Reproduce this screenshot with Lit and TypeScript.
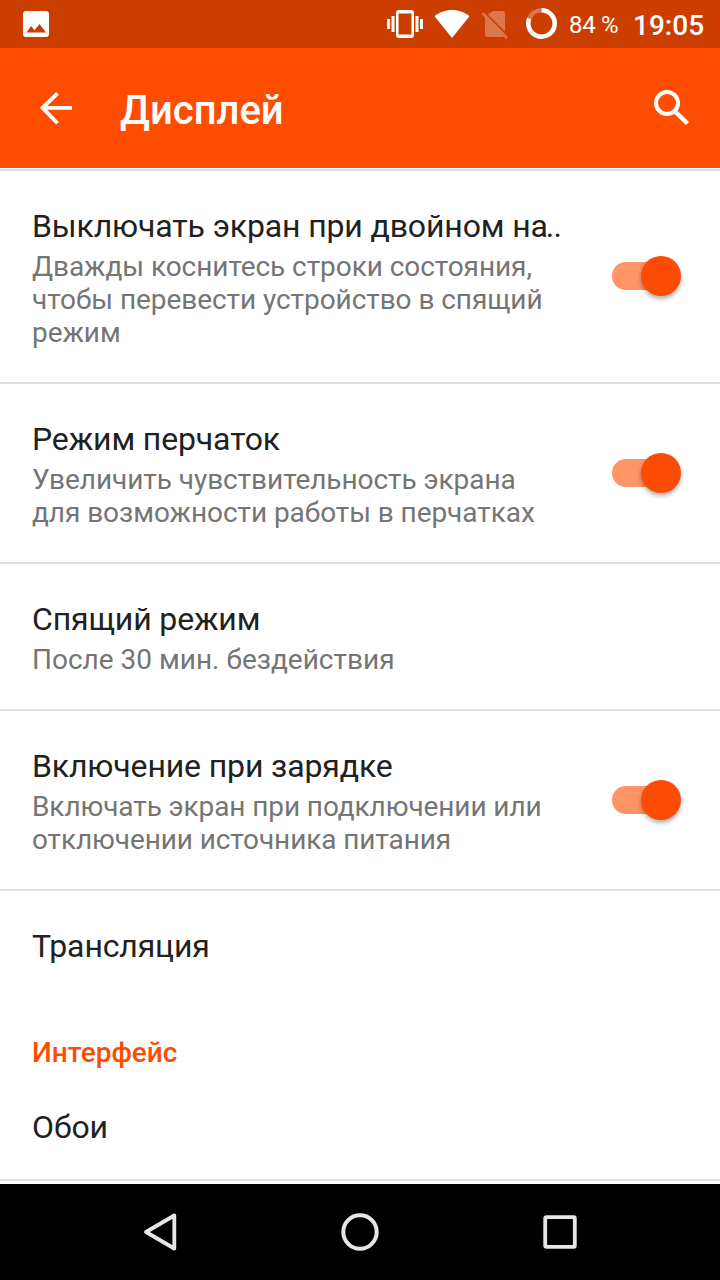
import { LitElement, html, css, nothing } from "lit";
import { customElement, property } from "lit/decorators.js";

@customElement("toggle-switch")
class ToggleSwitch extends LitElement {
  static styles = css`
    :host { display: flex; align-items: center; width: 69px; height: 40px; flex: none; margin-bottom: 1px; }
    .track { width: 58px; height: 28px; border-radius: 14px; background: #ff9466; flex: none; }
    .thumb {
      width: 40px; height: 40px; border-radius: 50%; background: #fa4c04; flex: none;
      margin-left: -29px; box-shadow: 0 3px 4px rgba(0, 0, 0, 0.3);
    }
  `;
  render() {
    return html`<div class="track"></div><div class="thumb"></div>`;
  }
}

@customElement("setting-row")
class SettingRow extends LitElement {
  @property() heading = "";
  @property({ type: Boolean }) truncated = false;
  @property({ attribute: false }) lines: string[] = [];
  @property({ type: Boolean }) toggle = false;

  static styles = css`
    :host {
      display: flex; align-items: center; justify-content: space-between;
      box-sizing: border-box; padding-right: 39px; flex: none;
    }
    .text { padding: 36px 0 33px 32px; }
    .title { font-size: 32px; line-height: 38px; color: #212121; white-space: nowrap; letter-spacing: -0.13px; }
    .dots { margin-left: -2px; letter-spacing: -0.8px; }
    .summary { margin-top: 5px; font-size: 28px; line-height: 33px; color: #757575; white-space: nowrap; letter-spacing: -0.06px; }
    :host(.charge) .summary { letter-spacing: -0.1px; }
    :host(.short) .summary { letter-spacing: 0; }
  `;
  render() {
    return html`
      <div class="text">
        <div class="title">${this.heading}${this.truncated ? html`<span class="dots">..</span>` : nothing}</div>
        ${this.lines.length
          ? html`<div class="summary">${this.lines.map((l) => html`<div>${l}</div>`)}</div>`
          : nothing}
      </div>
      ${this.toggle ? html`<toggle-switch></toggle-switch>` : nothing}
    `;
  }
}

@customElement("app-root")
class AppRoot extends LitElement {
  static styles = css`
    :host {
      display: flex; flex-direction: column; width: 720px; height: 1280px; overflow: hidden;
      background: #fff; font-family: Roboto, sans-serif;
    }
    svg { display: block; flex: none; }
    .status { height: 48px; background: #cc3d00; display: flex; align-items: center; color: #fff; flex: none; }
    .spacer { flex: 1; }
    .battery { width: 49px; margin-left: 9px; font-size: 24px; line-height: 28px; padding-top: 2px; white-space: nowrap; letter-spacing: -0.3px; }
    .clock { width: 72px; margin: 0 17px 0 15px; font-size: 28px; line-height: 33px; font-weight: 500; padding-top: 3px; white-space: nowrap; }
    .bar { height: 120px; background: #ff4d00; color: #fff; display: flex; align-items: center; flex: none; }
    .bar h1 { margin: 5px 0 0 48px; flex: 1; font-size: 40px; line-height: 47px; font-weight: 500; }
    .list { height: 1016px; display: flex; flex-direction: column; flex: none; overflow: hidden; }
    .divider { height: 2px; background: #dfdfdf; flex: none; }
    .first { margin-top: 1px; }
    .cast { height: 145px; align-items: flex-start; }
    .category { height: 36px; line-height: 33px; font-size: 28px; font-weight: 500; color: #ff4d00; padding-left: 32px; flex: none; }
    .wall { height: 107px; align-items: flex-start; }
    .nav { height: 96px; background: #000; flex: none; display: flex; justify-content: center; align-items: center; gap: 152px; }
  `;
  render() {
    return html`
      <div class="status">
        <svg width="560" height="48" viewBox="0 0 560 48">
          <path fill="#fff" fill-rule="evenodd" d="M26 11H46a3 3 0 0 1 3 3V34a3 3 0 0 1-3 3H26a3 3 0 0 1-3-3V14a3 3 0 0 1 3-3ZM26.500 32.500H46L39.500 24L34.500 30.200L31 26Z"/>
          <g fill="#fff">
            <path fill-rule="evenodd" d="M399 10H411a3 3 0 0 1 3 3V35a3 3 0 0 1-3 3H399a3 3 0 0 1-3-3V13a3 3 0 0 1 3-3ZM398.500 13.500V34.500H411.500V13.500Z"/>
            <path d="M387 19h3v10h-3zM391.500 16h3v16h-3zM415.500 16h3v16h-3zM420 19h3v10h-3z"/>
            <path d="M452 38L434.500 16.200C439 12.500 445 10 452 10S465 12.500 469.500 16.200Z"/>
          </g>
          <g fill="#fff" opacity=".3">
            <path d="M493 11H502a3 3 0 0 1 3 3V31.500L487.800 14.500Z"/>
            <path d="M481.500 14.300L483.500 12.300L508 37L506 39L503.700 36.700Q503 37 502 37H488a3 3 0 0 1-3-3V17.800Z"/>
          </g>
          <path d="M529.250 18.640A13.200 13.200 0 0 1 541.500 10.300" fill="none" stroke="#fff" stroke-opacity=".3" stroke-width="4.600"/>
          <path d="M541.500 10.300A13.200 13.200 0 1 1 529.250 18.640" fill="none" stroke="#fff" stroke-width="4.600"/>
        </svg>
        <div class="battery">84 %</div>
        <div class="spacer"></div>
        <div class="clock">19:05</div>
      </div>
      <div class="bar">
        <svg width="72" height="120" viewBox="0 0 72 120"><path d="M72 60H43M57.500 45.500L42.500 60L57.500 75.500" transform="translate(0 -.2)" fill="none" stroke="#fff" stroke-width="3.800"/></svg>
        <h1>Дисплей</h1>
        <svg width="72" height="120" viewBox="0 0 72 120"><circle cx="19" cy="55" r="11" fill="none" stroke="#fff" stroke-width="4"/><path d="M27 63.500L39.500 75.500" fill="none" stroke="#fff" stroke-width="4.500"/></svg>
      </div>
      <div class="list">
        <div class="divider first"></div>
        <setting-row heading="Выключать экран при двойном на" truncated .lines=${["Дважды коснитесь строки состояния,", "чтобы перевести устройство в спящий", "режим"]} toggle></setting-row>
        <div class="divider"></div>
        <setting-row heading="Режим перчаток" .lines=${["Увеличить чувствительность экрана", "для возможности работы в перчатках"]} toggle></setting-row>
        <div class="divider"></div>
        <setting-row class="short" heading="Спящий режим" .lines=${["После 30 мин. бездействия"]}></setting-row>
        <div class="divider"></div>
        <setting-row class="charge" heading="Включение при зарядке" .lines=${["Включать экран при подключении или", "отключении источника питания"]} toggle></setting-row>
        <div class="divider"></div>
        <setting-row class="cast" heading="Трансляция"></setting-row>
        <div class="category">Интерфейс</div>
        <setting-row class="wall" heading="Обои"></setting-row>
        <div class="divider"></div>
      </div>
      <div class="nav">
        <svg width="48" height="48" viewBox="0 0 48 48"><path d="M38.300 7.500V40.500L10 24Z" fill="none" stroke="#e6e6e6" stroke-width="3.800" stroke-linejoin="round"/></svg>
        <svg width="48" height="48" viewBox="0 0 48 48"><circle cx="24" cy="24" r="16.700" fill="none" stroke="#e6e6e6" stroke-width="4"/></svg>
        <svg width="48" height="48" viewBox="0 0 48 48"><rect x="9.200" y="9.200" width="29.600" height="29.600" rx="1" fill="none" stroke="#e6e6e6" stroke-width="3.800"/></svg>
      </div>
    `;
  }
}
